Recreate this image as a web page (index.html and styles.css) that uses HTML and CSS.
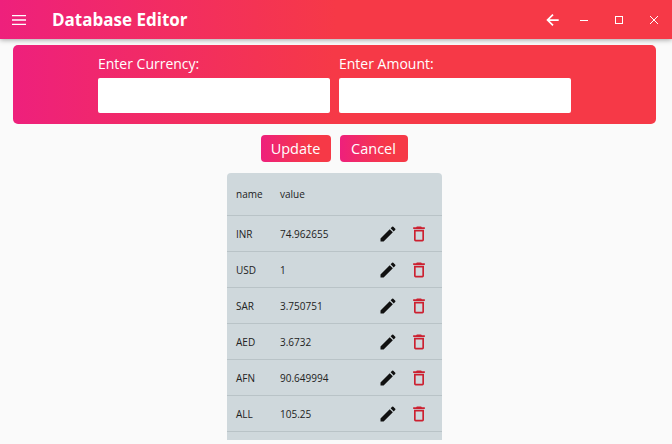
FILE: index.html
```html
<!DOCTYPE html>
<html lang="en">
<head>
    <meta charset="UTF-8">
    <title>Database Editor</title>
    <link rel="stylesheet" href="styles.css">
</head>
<body>

    <header class="app-bar">
        <svg class="menu-icon" width="14" height="10" viewBox="0 0 14 10"><path d="M0 .7h14M0 5h14M0 9.3h14" stroke="#fff" stroke-width="1.3" fill="none"/></svg>
        <h1 class="app-title">Database Editor</h1>
        <svg class="back-icon" width="14" height="14" viewBox="0 0 16 16"><path d="M14.5 8H2M8 1.8 1.8 8 8 14.2" stroke="#fff" stroke-width="2" fill="none"/></svg>
        <div class="window-controls">
            <svg width="10" height="10" viewBox="0 0 10 10"><path d="M1 5.5h8" stroke="#fff" fill="none"/></svg>
            <svg width="10" height="10" viewBox="0 0 10 10"><rect x="1.5" y="1.5" width="7" height="7" stroke="#fff" fill="none"/></svg>
            <svg width="10" height="10" viewBox="0 0 10 10"><path d="M1 1l8 8M9 1l-8 8" stroke="#fff" fill="none"/></svg>
        </div>
    </header>

    <form class="edit-card">
        <div class="field">
            <label for="currency">Enter Currency:</label>
            <input type="text" id="currency">
        </div>
        <div class="field">
            <label for="amount">Enter Amount:</label>
            <input type="text" id="amount">
        </div>
    </form>

    <div class="actions">
        <button type="button" class="btn btn-update">Update</button>
        <button type="button" class="btn btn-cancel">Cancel</button>
    </div>

    <div class="table-wrap">
        <table class="rates">
            <thead>
                <tr><th class="col-name">name</th><th class="col-value">value</th><th></th></tr>
            </thead>
            <tbody id="rateRows"></tbody>
        </table>
    </div>

    <template id="rowIcons">
        <svg class="edit-icon" width="20" height="20" viewBox="0 0 24 24"><path d="M3 17.25V21h3.75L17.81 9.94l-3.75-3.75L3 17.25zM20.71 7.04a1 1 0 0 0 0-1.41l-2.34-2.34a1 1 0 0 0-1.41 0l-1.83 1.83 3.75 3.75 1.83-1.83z" fill="#111"/></svg>
        <svg class="trash-icon" width="20" height="20" viewBox="0 0 24 24"><path d="M16 9v10H8V9h8m-1.5-6h-5l-1 1H5v2h14V4h-3.5l-1-1zM18 7H6v12a2 2 0 0 0 2 2h8a2 2 0 0 0 2-2V7z" fill="#cc2030"/></svg>
    </template>

    <script>
        const rates = [
            ['INR', '74.962655'],
            ['USD', '1'],
            ['SAR', '3.750751'],
            ['AED', '3.6732'],
            ['AFN', '90.649994'],
            ['ALL', '105.25'],
            ['', '']
        ];
        const tbody = document.getElementById('rateRows');
        const icons = document.getElementById('rowIcons');

        rates.forEach(rate => {
            const row = document.createElement('tr');
            const name = document.createElement('td');
            const value = document.createElement('td');
            const tools = document.createElement('td');
            name.textContent = rate[0];
            value.textContent = rate[1];
            tools.className = 'col-tools';
            if (rate[0]) {
                tools.appendChild(icons.content.cloneNode(true));
            }
            row.append(name, value, tools);
            tbody.appendChild(row);
        });
    </script>

</body>
</html>
```

FILE: styles.css
```css
html, body {
    height: 444px;
    overflow: hidden;
}

body {
    margin: 0;
    background-color: #fafafa;
    font-family: 'Open Sans', 'Noto Sans', sans-serif;
    color: #222;
}

.app-bar {
    display: flex;
    align-items: center;
    height: 39px;
    padding-left: 12px;
    background: linear-gradient(90deg, #ee207c, #f63947 50%);
    box-shadow: 0 1px 5px rgba(0, 0, 0, 0.35);
    color: #fff;
}

.app-title {
    margin: 0 0 0 26px;
    font-size: 17px;
    font-weight: 700;
    flex: 1;
}

.back-icon {
    margin-right: 19px;
}

.window-controls {
    display: flex;
    gap: 25px;
    margin-right: 13px;
}

.edit-card {
    display: flex;
    gap: 9px;
    height: 79px;
    box-sizing: border-box;
    margin: 6px 16px 0 13px;
    padding: 9px 0 0 85px;
    border-radius: 5px;
    background: linear-gradient(90deg, #ee207c, #f63947 50%);
}

.field {
    width: 232px;
}

.field label {
    display: block;
    height: 24px;
    font-size: 14px;
    line-height: 20px;
    color: #fff;
}

.field input {
    display: block;
    width: 100%;
    height: 35px;
    box-sizing: border-box;
    border: none;
    border-radius: 2px;
    background-color: #fff;
    outline: none;
}

.actions {
    display: flex;
    justify-content: center;
    gap: 9px;
    margin: 11px 4px 0 0;
}

.btn {
    height: 27px;
    padding: 0;
    border: none;
    border-radius: 4px;
    background: linear-gradient(90deg, #ee207c, #f63947 70%);
    color: #fff;
    font-family: inherit;
    font-size: 14.5px;
}

.btn-update {
    width: 70px;
}

.btn-cancel {
    width: 68px;
}

.table-wrap {
    width: 215px;
    height: 267px;
    margin: 11px 0 0 227px;
    overflow: hidden;
    border-radius: 4px 4px 0 0;
    background-color: #cfd8dc;
}

.rates {
    width: 100%;
    border-collapse: collapse;
    font-size: 10px;
}

.rates th {
    height: 42px;
    padding: 0;
    font-weight: 400;
    text-align: left;
    border-bottom: 1px solid #b9c3c7;
}

.rates td {
    height: 35px;
    padding: 0;
    border-bottom: 1px solid #b9c3c7;
}

.rates tr > :first-child {
    width: 44px;
    padding-left: 9px;
}

.col-value,
.rates td:nth-child(2) {
    width: 96px;
}

.rates .col-tools {
    padding-left: 2px;
    white-space: nowrap;
    line-height: 0;
}

.col-tools svg {
    vertical-align: middle;
}

.edit-icon {
    margin-right: 8px;
}
```
